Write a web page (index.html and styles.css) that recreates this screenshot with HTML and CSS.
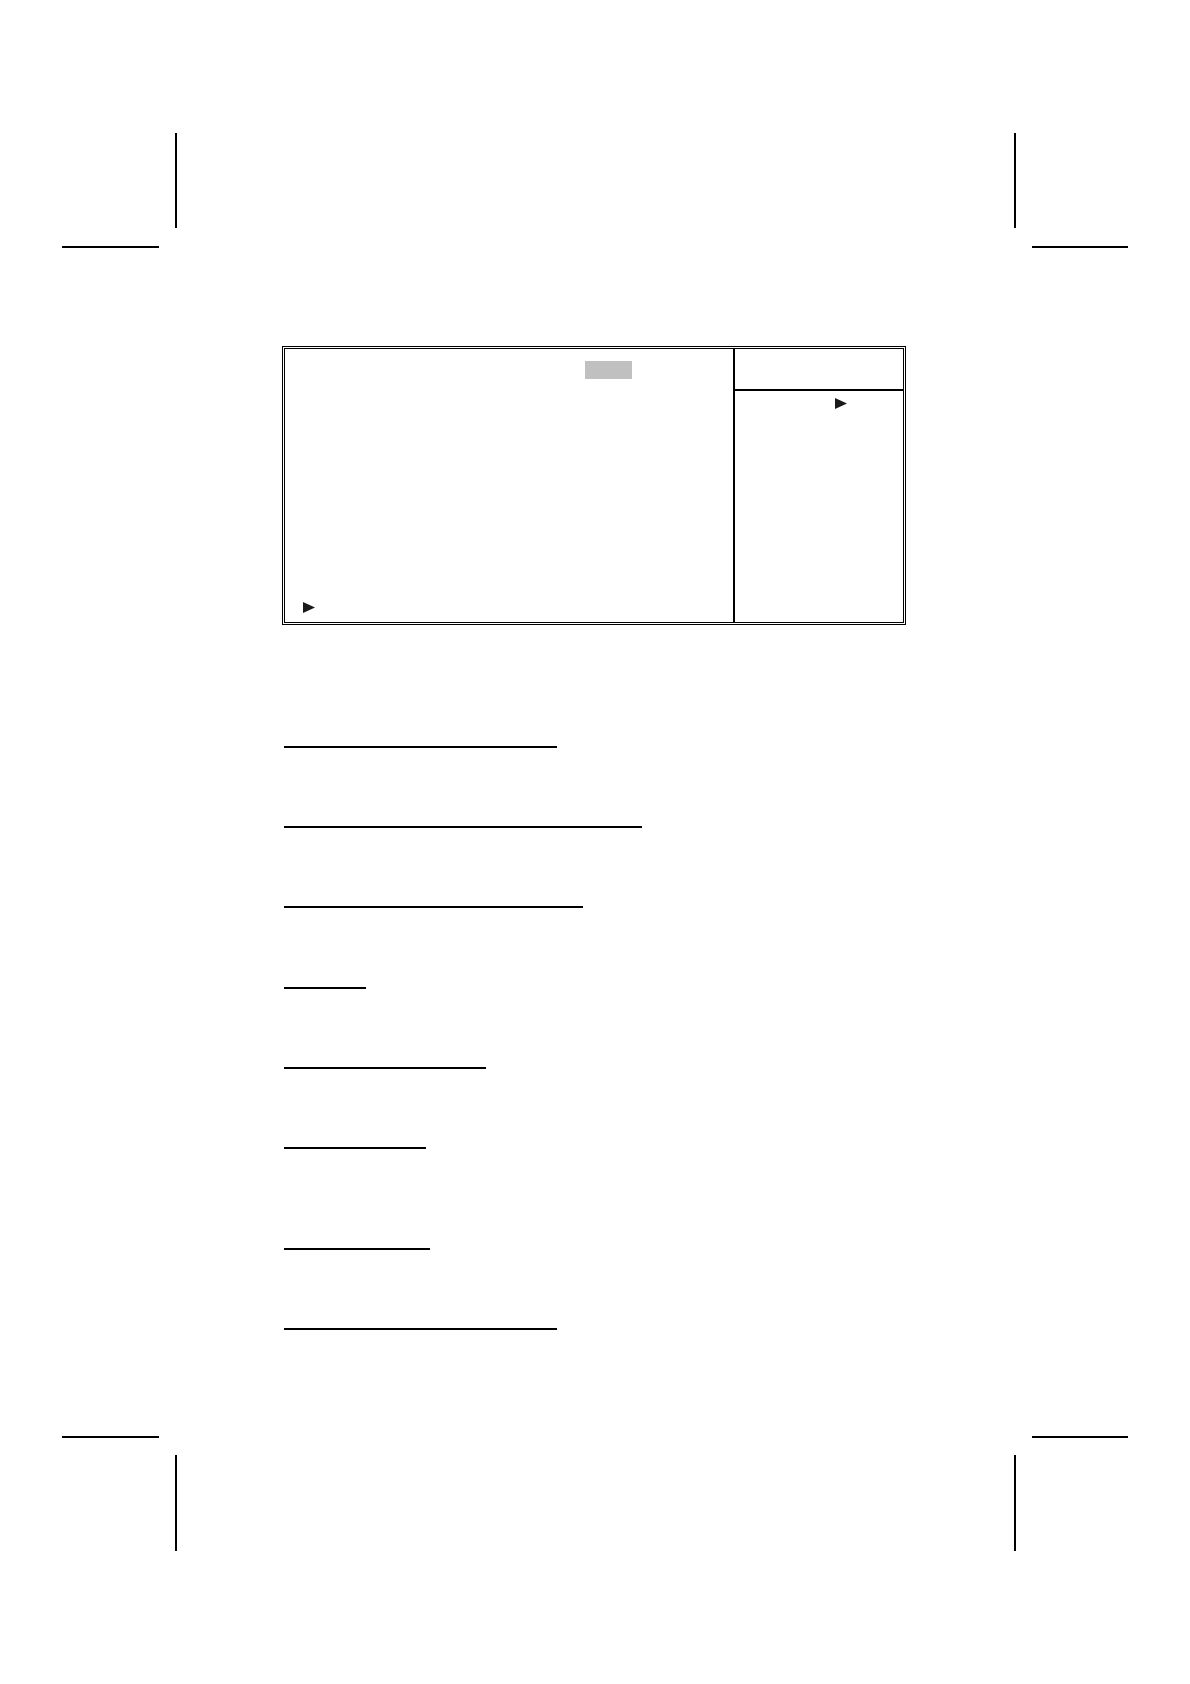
FILE: index.html
```html
<!DOCTYPE html>
<html lang="en">
<head>
    <meta charset="utf-8">
    <title>Setup Utility</title>
    <meta name="viewport" content="width=device-width, initial-scale=1.0">
    <link rel="stylesheet" href="styles.css">
</head>
<body>
    <div class="page">
        <!-- top crop marks -->
        <header class="crop-row">
            <svg class="crop-mark" viewBox="0 0 115 115" aria-hidden="true">
                <rect x="113" y="0" width="2" height="95"/>
                <rect x="0" y="113" width="97" height="2"/>
            </svg>
            <svg class="crop-mark" viewBox="0 0 115 115" aria-hidden="true">
                <rect x="1" y="0" width="2" height="95"/>
                <rect x="19" y="113" width="96" height="2"/>
            </svg>
        </header>

        <main class="content">
            <!-- setup screen -->
            <section class="screen">
                <div class="screen-main">
                    <div class="highlight"></div>
                    <svg class="arrow" viewBox="0 0 12 11" aria-hidden="true"><path d="M0 0L12 5.5L0 11Z"/></svg>
                </div>
                <aside class="screen-side">
                    <div class="side-title"></div>
                    <div class="side-help">
                        <svg class="arrow" viewBox="0 0 12 11" aria-hidden="true"><path d="M0 0L12 5.5L0 11Z"/></svg>
                    </div>
                </aside>
            </section>

            <!-- item rules -->
            <section class="items">
                <div class="item-group">
                    <hr class="rule rule-long">
                    <hr class="rule rule-longest">
                    <hr class="rule rule-longer">
                </div>
                <div class="item-group item-group-middle">
                    <hr class="rule rule-tiny">
                    <hr class="rule rule-medium">
                    <hr class="rule rule-short">
                </div>
                <div class="item-group item-group-last">
                    <hr class="rule rule-small">
                    <hr class="rule rule-long">
                </div>
            </section>
        </main>

        <!-- bottom crop marks -->
        <footer class="crop-row">
            <svg class="crop-mark" viewBox="0 0 115 115" aria-hidden="true">
                <rect x="0" y="0" width="97" height="2"/>
                <rect x="113" y="19" width="2" height="96"/>
            </svg>
            <svg class="crop-mark" viewBox="0 0 115 115" aria-hidden="true">
                <rect x="19" y="0" width="96" height="2"/>
                <rect x="1" y="19" width="2" height="96"/>
            </svg>
        </footer>
    </div>
</body>
</html>
```
FILE: styles.css
```css
body {
    margin: 0;
    background-color: white;
    font-family: "Liberation Sans", Arial, sans-serif;
    color: black;
}

.page {
    display: flex;
    flex-direction: column;
    min-height: 100vh;
    padding: 133px 62px;
    box-sizing: border-box;
}

/* Crop marks in the page corners */
.crop-row {
    display: flex;
    justify-content: space-between;
}

.crop-mark {
    display: block;
    width: 115px;
    height: 115px;
    fill: black;
}

.content {
    flex: 1;
    padding: 98px 222px 0 220px;
}

/* Double framed setup screen */
.screen {
    display: grid;
    grid-template-columns: 1fr 170px;
    min-height: 273px;
    border: 3px double black;
}

.screen-main {
    display: flex;
    flex-direction: column;
    justify-content: space-between;
    padding: 12px 101px 9px 18px;
}

.highlight {
    align-self: flex-end;
    width: 47px;
    height: 18px;
    background-color: #c0c0c0;
}

.arrow {
    display: block;
    width: 12px;
    height: 11px;
    fill: #1a1a1a;
}

.screen-side {
    border-left: 2px solid black;
}

.side-title {
    height: 40px;
    border-bottom: 2px solid black;
}

.side-help {
    display: flex;
    justify-content: flex-end;
    padding: 7px 56px 0 0;
}

/* Rules below the screen */
.items {
    margin-top: 121px;
    padding-left: 2px;
}

.item-group {
    display: flex;
    flex-direction: column;
    gap: 78px;
}

.item-group-middle {
    margin-top: 79px;
}

.item-group-last {
    margin-top: 99px;
}

.rule {
    height: 2px;
    margin: 0;
    border: 0;
    background-color: black;
}

.rule-tiny {
    width: 82px;
}

.rule-short {
    width: 142px;
}

.rule-small {
    width: 146px;
}

.rule-medium {
    width: 202px;
}

.rule-long {
    width: 273px;
}

.rule-longer {
    width: 299px;
}

.rule-longest {
    width: 358px;
}
```
